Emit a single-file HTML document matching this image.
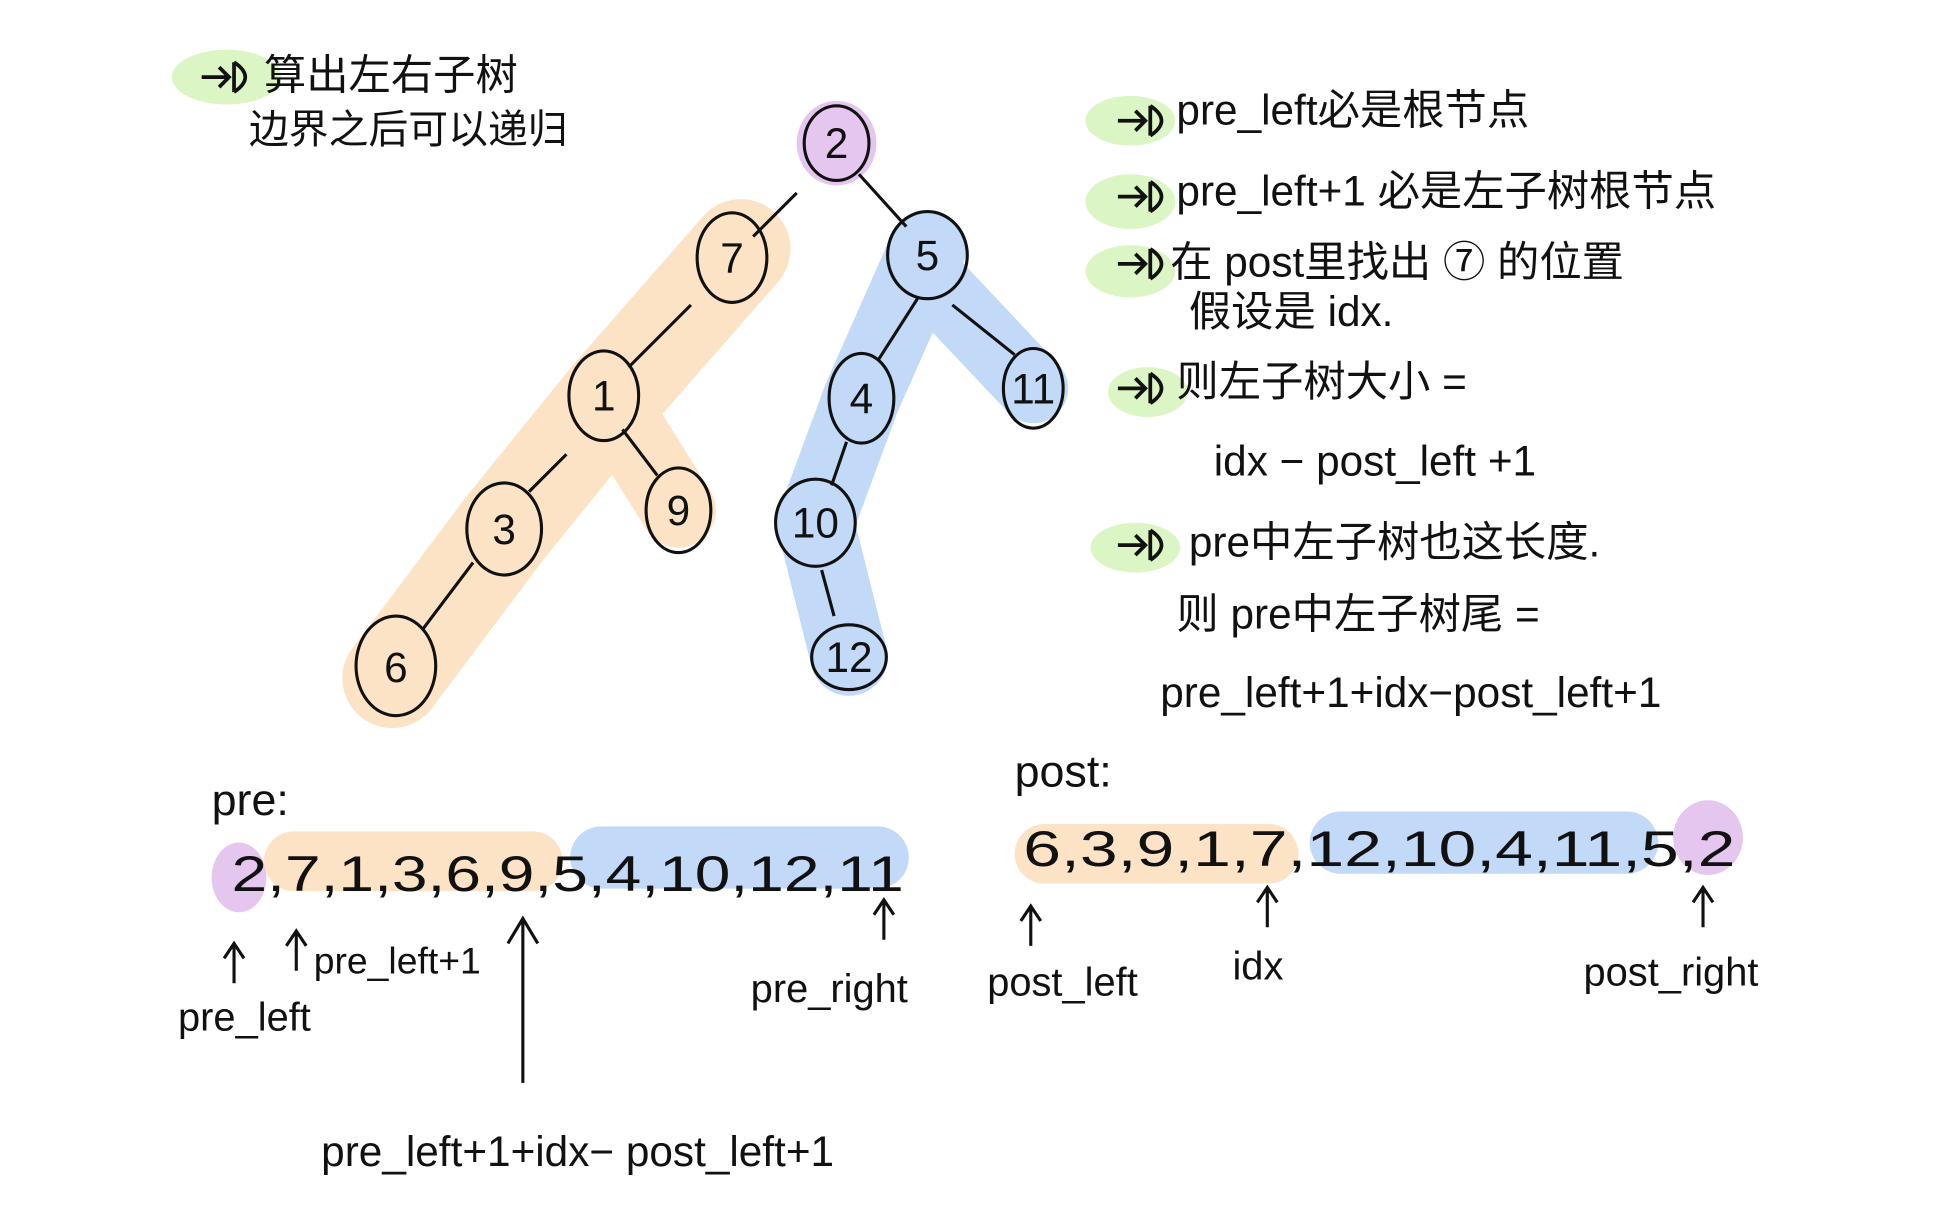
<!DOCTYPE html>
<html><head><meta charset="utf-8">
<style>
html,body{margin:0;padding:0;background:#fff;}
svg{display:block;}
text{font-family:"Liberation Sans","Noto Sans CJK SC",sans-serif;fill:#111;}
</style></head><body>
<svg width="1952" height="1216" viewBox="0 0 1568 977" preserveAspectRatio="none" xmlns="http://www.w3.org/2000/svg">
<defs>
<g id="arr"><path d="M0 0 L0 -30 M-8 -20 L0 -32 L8 -20" stroke="#111" stroke-width="2.5" fill="none"/></g>
<g id="dmark"><path d="M0 0 L22 0 M14 -8 L22 0 L14 8 M26 -12 L26 12 M26 -12 Q44 0 26 12" stroke="#111" stroke-width="3" fill="none"/></g>
</defs>
<rect width="1568" height="977" fill="#fff"/>
<!-- green blobs -->
<g fill="#dcf5c4">
<ellipse cx="182" cy="62" rx="44" ry="22"/>
<ellipse cx="908" cy="97" rx="36" ry="20"/>
<ellipse cx="908" cy="162" rx="36" ry="22"/>
<ellipse cx="908" cy="218" rx="36" ry="21"/>
<ellipse cx="922" cy="315" rx="32" ry="20"/>
<ellipse cx="912" cy="440" rx="36" ry="20"/>
</g>
<g stroke="#fde3c6" stroke-linecap="round" stroke-linejoin="round" fill="none">
<path d="M595 200 L490 320 L405 425 L315 545" stroke-width="80"/>
<path d="M495 330 L545 410" stroke-width="60"/>
</g>
<g stroke="#c2d9f7" stroke-linecap="round" stroke-linejoin="round" fill="none">
<path d="M745 200 L692 320 L655 420 L682 528" stroke-width="62"/>
<path d="M748 225 L830 312" stroke-width="56"/>
</g>
<ellipse cx="672" cy="115" rx="32" ry="34" fill="#e4c6ef"/>
<g stroke="#111" stroke-width="2.5" fill="none">
<path d="M640 155 L605 190"/><path d="M690 140 L728 182"/>
<path d="M555 245 L505 295"/><path d="M455 365 L425 395"/>
<path d="M500 345 L528 382"/><path d="M380 452 L340 505"/>
<path d="M737 240 L705 290"/><path d="M765 245 L815 285"/>
<path d="M680 355 L668 390"/><path d="M660 458 L670 495"/>
</g>
<g stroke="#111" stroke-width="2.5" fill="none">
<ellipse cx="672" cy="115" rx="26" ry="30"/>
<ellipse cx="588" cy="207" rx="28" ry="36"/>
<ellipse cx="745" cy="205" rx="32" ry="35"/>
<ellipse cx="485" cy="318" rx="28" ry="36"/>
<ellipse cx="405" cy="425" rx="30" ry="37"/>
<ellipse cx="545" cy="410" rx="26" ry="34"/>
<ellipse cx="318" cy="535" rx="32" ry="40"/>
<ellipse cx="692" cy="320" rx="26" ry="36"/>
<ellipse cx="830" cy="312" rx="24" ry="32"/>
<ellipse cx="655" cy="420" rx="32" ry="35"/>
<ellipse cx="682" cy="528" rx="30" ry="26"/>
</g>
<g font-size="34" text-anchor="middle">
<text x="672" y="127">2</text><text x="588" y="219">7</text><text x="745" y="217">5</text>
<text x="485" y="330">1</text><text x="405" y="437">3</text><text x="545" y="422">9</text>
<text x="318" y="548">6</text><text x="692" y="332">4</text><text x="830" y="324">11</text>
<text x="655" y="432">10</text><text x="682" y="540">12</text>
</g>
<use href="#dmark" x="162" y="62"/>
<text x="212" y="72" font-size="34">算出左右子树</text>
<text x="200" y="115" font-size="32">边界之后可以递归</text>
<use href="#dmark" x="898" y="97"/>
<use href="#dmark" x="898" y="158"/>
<use href="#dmark" x="898" y="212"/>
<use href="#dmark" x="898" y="312"/>
<use href="#dmark" x="898" y="438"/>
<g font-size="34">
<text x="945" y="100">pre_left必是根节点</text>
<text x="945" y="165">pre_left+1 必是左子树根节点</text>
<text x="940" y="222">在 post里找出 ⑦ 的位置</text>
<text x="955" y="262">假设是 idx.</text>
<text x="945" y="318">则左子树大小 =</text>
<text x="975" y="382">idx − post_left +1</text>
<text x="955" y="447">pre中左子树也这长度.</text>
<text x="945" y="505">则 pre中左子树尾 =</text>
<text x="932" y="568">pre_left+1+idx−post_left+1</text>
</g>
<text x="170" y="655" font-size="36">pre:</text>
<text x="815" y="632" font-size="36">post:</text>
<ellipse cx="192" cy="705" rx="22" ry="28" fill="#e4c6ef"/>
<rect x="212" y="668" width="240" height="48" rx="24" fill="#fde3c6"/>
<rect x="458" y="664" width="272" height="50" rx="25" fill="#c2d9f7"/>
<rect x="815" y="662" width="228" height="48" rx="24" fill="#fde3c6"/>
<rect x="1052" y="652" width="280" height="50" rx="25" fill="#c2d9f7"/>
<ellipse cx="1372" cy="673" rx="28" ry="30" fill="#e4c6ef"/>
<text x="186" y="716" font-size="40" textLength="540" lengthAdjust="spacingAndGlyphs">2,7,1,3,6,9,5,4,10,12,11</text>
<text x="822" y="696" font-size="40" textLength="572" lengthAdjust="spacingAndGlyphs">6,3,9,1,7,12,10,4,11,5,2</text>
<use href="#arr" x="188" y="790"/><use href="#arr" x="238" y="780"/>
<use href="#arr" x="710" y="755"/><use href="#arr" x="828" y="760"/>
<use href="#arr" x="1018" y="745"/><use href="#arr" x="1368" y="745"/>
<path d="M420 870 L420 740 M408 758 L420 738 L432 758" stroke="#111" stroke-width="2.5" fill="none"/>
<g font-size="32">
<text x="252" y="782" font-size="30">pre_left+1</text>
<text x="143" y="828">pre_left</text>
<text x="603" y="805">pre_right</text>
<text x="793" y="800">post_left</text>
<text x="990" y="787">idx</text>
<text x="1272" y="792">post_right</text>
<text x="258" y="937" font-size="34">pre_left+1+idx− post_left+1</text>
</g>
</svg>
</body></html>
